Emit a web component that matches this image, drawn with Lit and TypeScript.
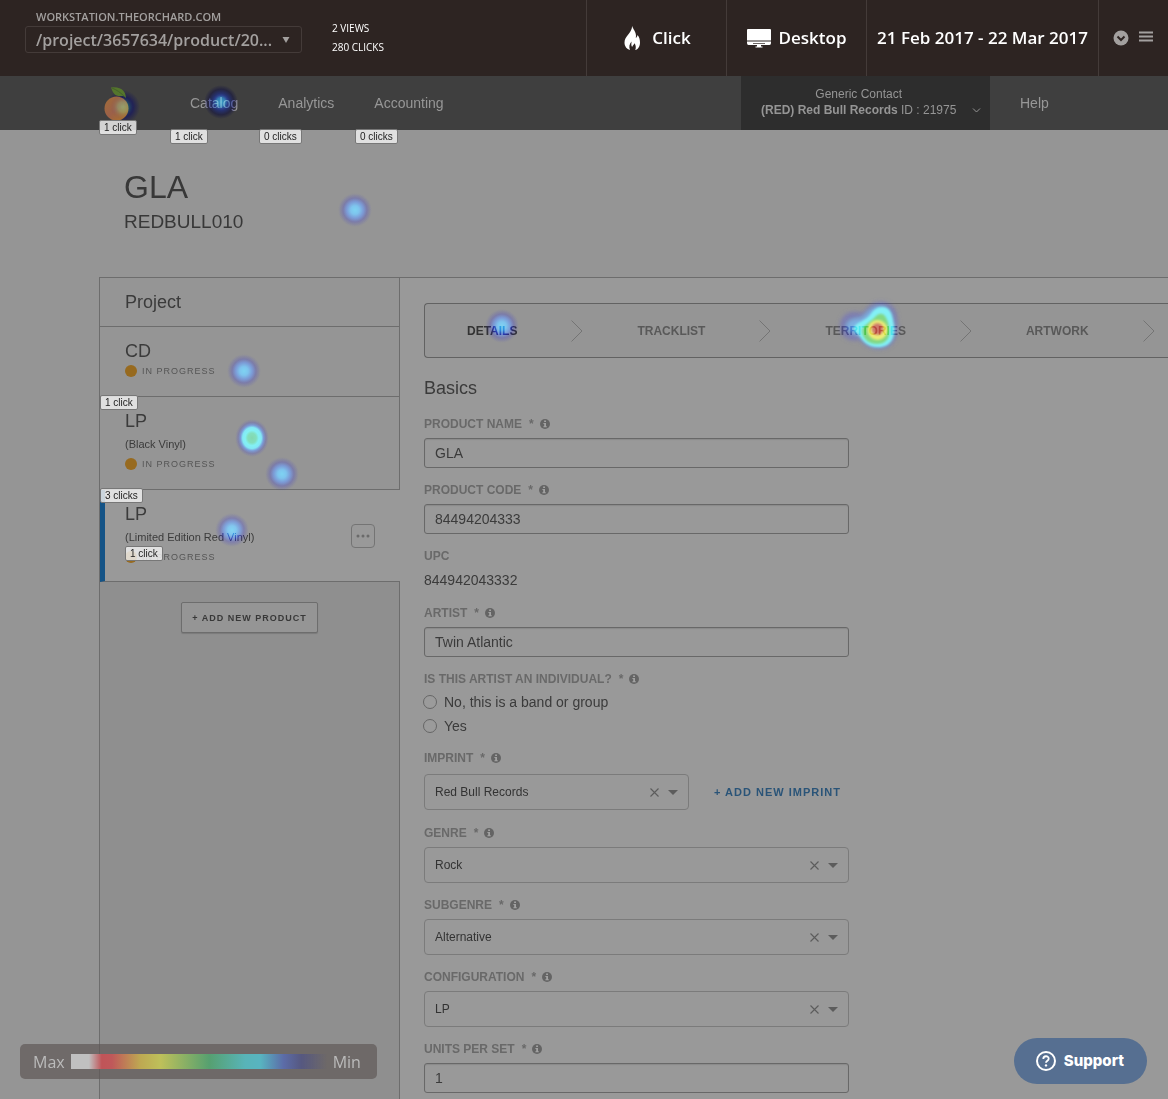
import { LitElement, html, css, svg, nothing } from "lit";
import { customElement, property } from "lit/decorators.js";
import { classMap } from "lit/directives/class-map.js";

interface Badge { x: number; y: number; label: string }
interface Spot { x: number; y: number; kind: "light" | "dark" | "warm" | "logo" }
interface Product { title: string; note?: string; active?: boolean }

const badges: Badge[] = [
  { x: 99, y: 120, label: "1 click" },
  { x: 170, y: 129, label: "1 click" },
  { x: 259, y: 129, label: "0 clicks" },
  { x: 355, y: 129, label: "0 clicks" },
  { x: 100, y: 395, label: "1 click" },
  { x: 100, y: 488, label: "3 clicks" },
  { x: 125, y: 546, label: "1 click" },
];

const spots: Spot[] = [
  { x: 123, y: 107, kind: "logo" },
  { x: 221, y: 102, kind: "dark" },
  { x: 355, y: 210, kind: "light" },
  { x: 502, y: 326, kind: "light" },
  { x: 244, y: 371, kind: "light" },
  { x: 252, y: 438, kind: "warm" },
  { x: 282, y: 474, kind: "light" },
  { x: 232, y: 530, kind: "light" },
];

const products: Product[] = [
  { title: "CD" },
  { title: "LP", note: "(Black Vinyl)" },
  { title: "LP", note: "(Limited Edition Red Vinyl)", active: true },
];

const steps = ["Details", "Tracklist", "Territories", "Artwork"];

/** Click density drawn over the tracked page. */
@customElement("heat-layer")
export class HeatLayer extends LitElement {
  static styles = css`
    :host {
      position: absolute;
      inset: 0;
      overflow: hidden;
      pointer-events: none;
    }
    .canvas {
      display: block;
      width: 100%;
      height: 100%;
      mix-blend-mode: hard-light;
    }
    .badge {
      position: absolute;
      height: 15px;
      padding: 0 4px;
      box-sizing: border-box;
      border: 1px solid #777;
      border-radius: 2px;
      background: rgba(238, 238, 238, 0.84);
      color: #222;
      font: 10px/13px "Liberation Sans", Arial, sans-serif;
      white-space: nowrap;
    }
  `;

  render() {
    return html`
      <svg class="canvas" aria-hidden="true">
        <defs>
          <radialGradient id="light">
            <stop offset="0" stop-color="#6ccaf0" />
            <stop offset=".25" stop-color="#6cb8ea" />
            <stop offset=".5" stop-color="#6a84cc" />
            <stop offset=".7" stop-color="#68689a" stop-opacity=".9" />
            <stop offset=".85" stop-color="#6a6a92" stop-opacity=".5" />
            <stop offset="1" stop-color="#707090" stop-opacity="0" />
          </radialGradient>
          <radialGradient id="dark">
            <stop offset="0" stop-color="#70bed8" />
            <stop offset=".25" stop-color="#68a8cc" />
            <stop offset=".5" stop-color="#4c64a0" />
            <stop offset=".75" stop-color="#464680" stop-opacity=".9" />
            <stop offset="1" stop-color="#464680" stop-opacity="0" />
          </radialGradient>
          <radialGradient id="logo">
            <stop offset="0" stop-color="#78b09c" />
            <stop offset=".4" stop-color="#78a494" stop-opacity=".85" />
            <stop offset="1" stop-color="#706c88" stop-opacity="0" />
          </radialGradient>
          <radialGradient id="warm">
            <stop offset="0" stop-color="#70d0a0" />
            <stop offset=".25" stop-color="#70d8b0" />
            <stop offset=".4" stop-color="#70eef2" />
            <stop offset=".55" stop-color="#70e4f4" />
            <stop offset=".68" stop-color="#6a84cc" />
            <stop offset=".82" stop-color="#6a6a98" stop-opacity=".8" />
            <stop offset="1" stop-color="#707090" stop-opacity="0" />
          </radialGradient>
          <filter id="soft" x="-30%" y="-30%" width="160%" height="160%"><feGaussianBlur stdDeviation="2" /></filter>
          <filter id="edge" x="-30%" y="-30%" width="160%" height="160%"><feGaussianBlur stdDeviation="1.2" /></filter>
        </defs>
        ${spots.map((s) =>
          s.kind === "warm"
            ? svg`<ellipse cx=${s.x} cy=${s.y} rx="17" ry="19" fill="url(#warm)" />`
            : svg`<circle cx=${s.x} cy=${s.y} r=${s.kind === "logo" ? 13 : 17} fill="url(#${s.kind})" />`
        )}
        <path d="M840 326c0-8 6-14 14-14 6 0 9 2 12-2 3-5 8-8 15-8 10 0 16 7 16 16 3 19-4 31-19 31-9 0-14-6-19-9-10 2-19-3-19-14z" fill="#6a6aa0" filter="url(#soft)" />
        <path d="M846 326c1-6 8-8 14-8 5-1 9-12 20-12 8 0 12 6 13 14 4 17-3 27-15 27-9 0-14-5-18-11-6-2-14-3-14-10z" fill="#6aa0dc" filter="url(#soft)" />
        <path d="M854 327c3-5 11-6 16-12 3-5 7-8 12-8 7 0 10 6 11 14 4 16-2 26-15 26-11 0-15-6-19-12-3-2-6-5-5-8z" fill="#70eef4" filter="url(#edge)" />
        <path d="M862 330c2-5 8-8 12-12 3-3 5-5 8-4 4 1 6 7 7 13 2 11-3 17-12 17-9 0-15-6-15-14z" fill="#70d070" filter="url(#edge)" />
        <circle cx="877.500" cy="330" r="10" fill="#eaea66" filter="url(#edge)" />
        <circle cx="877.500" cy="329" r="6" fill="#c8685c" filter="url(#edge)" />
      </svg>
      ${badges.map((b) => html`<span class="badge" style="left:${b.x}px;top:${b.y}px">${b.label}</span>`)}
    `;
  }
}

/** Caption with optional required mark and info icon. */
@customElement("field-caption")
export class FieldCaption extends LitElement {
  @property() text = "";
  @property({ type: Boolean }) required = false;

  static styles = css`
    :host {
      display: flex;
      align-items: center;
      height: 16px;
      color: #696969;
      font: bold 12px/17px "Liberation Sans", Arial, sans-serif;
      text-transform: uppercase;
    }
    .star {
      margin: 0 6px 0 7px;
    }
    .info {
      width: 10px;
      height: 10px;
    }
  `;

  render() {
    return html`${this.text}${this.required
      ? html`<span class="star">*</span>
          <svg class="info" viewBox="0 0 10 10" aria-hidden="true">
            <circle cx="5" cy="5" r="5" fill="#646464" />
            <path d="M4.100 1.500h1.900v1.500h-1.900zM3.400 4h2.600v3.200h.8v1.100h-3.400v-1.100h.8v-2.100h-.8z" fill="#a2a2a2" />
          </svg>`
      : nothing}`;
  }
}

@customElement("app-root")
export class AppRoot extends LitElement {
  static styles = css`
    :host {
      display: block;
      position: relative;
      min-height: 100vh;
      overflow: hidden;
      background: #959595;
      color: #3b3b3b;
      font: 14px/20px "Liberation Sans", Arial, sans-serif;
    }
    * {
      box-sizing: border-box;
    }
    h1, h2, p, ul, ol {
      margin: 0;
      padding: 0;
      font-weight: normal;
      list-style: none;
    }
    button, input, select {
      margin: 0;
      font-family: inherit;
      color: inherit;
    }
    button {
      padding: 0;
      border: 0;
      background: none;
    }
    .page {
      display: flex;
      flex-direction: column;
      min-height: 100vh;
    }

    .toolbar {
      display: flex;
      height: 76px;
      background: #2d2422;
      color: #fff;
      font-family: "Open Sans", "Noto Sans", sans-serif;
    }
    .address {
      display: flex;
      flex-direction: column;
      gap: 2px;
      width: 277px;
      margin: 9px 30px 0 25px;
      color: #a3a09f;
    }
    .domain {
      padding-left: 11px;
      font: 600 11px/15px "Open Sans", sans-serif;
    }
    .picker {
      display: flex;
      align-items: center;
      height: 27px;
      border: 1px solid #443b39;
      border-radius: 3px;
      padding-right: 11px;
    }
    .path {
      flex: 1;
      min-width: 0;
      height: 25px;
      padding: 0 0 0 10px;
      border: 0;
      appearance: none;
      background: none;
      font: 600 16px/24px "Open Sans", sans-serif;
    }
    .caret {
      width: 8px;
      height: 6px;
    }
    .totals {
      flex: 1;
      padding-top: 19px;
      font: 10px/19px "Open Sans", sans-serif;
    }
    .cell {
      display: flex;
      align-items: center;
      justify-content: center;
      width: 140px;
      border-left: 1px solid #443b39;
      font: 600 17px/24px "Open Sans", sans-serif;
      white-space: nowrap;
    }
    .cell.range {
      width: 232px;
    }
    .cell.tools {
      width: 70px;
      gap: 9px;
    }
    .flame {
      width: 20px;
      height: 26px;
      margin-right: 10px;
    }
    .screen {
      width: 24px;
      height: 20px;
      margin-right: 8px;
    }
    .tool {
      display: block;
      width: 16px;
      height: 16px;
    }

    .nav {
      display: flex;
      height: 54px;
      background: #3f3f3f;
      color: #979797;
    }
    .logo {
      width: 28px;
      height: 36px;
      margin: 9px 58px 0 104px;
      overflow: visible;
    }
    .links {
      display: flex;
      align-items: center;
      flex: 1;
      gap: 40px;
    }
    .nav a {
      color: inherit;
      text-decoration: none;
    }
    .account {
      display: grid;
      grid-template-columns: 1fr 9px;
      align-content: center;
      column-gap: 16px;
      width: 249px;
      padding: 0 10px 2px 20px;
      background: #2d2d2d;
      color: #959595;
      font-size: 12px;
      line-height: 16px;
      white-space: nowrap;
    }
    .account .contact {
      text-align: center;
      grid-column: 1;
    }
    .down {
      width: 9px;
      height: 16px;
    }
    .help {
      display: flex;
      align-items: center;
      width: 178px;
      padding-left: 30px;
    }

    .heading {
      padding: 37px 0 41px 124px;
    }
    .title {
      font-size: 32px;
      line-height: 40px;
      color: #383838;
    }
    .code {
      font-size: 19px;
      line-height: 29px;
      color: #383838;
    }

    .body {
      display: flex;
      flex: 1;
      margin-left: 99px;
      border-top: 1px solid #6d6d6d;
      background: #999;
    }
    .sidebar {
      display: flex;
      flex-direction: column;
      width: 301px;
      flex: none;
      border-left: 1px solid #6d6d6d;
    }
    .project {
      height: 49px;
      padding-left: 25px;
      background: #959595;
      border-right: 1px solid #6d6d6d;
      border-bottom: 1px solid #6d6d6d;
      font-size: 18px;
      line-height: 48px;
    }
    .product {
      display: flex;
      align-items: center;
      padding: 14px 24px 15px 25px;
      background: #959595;
      border-right: 1px solid #6d6d6d;
      border-bottom: 1px solid #6d6d6d;
    }
    .product.active {
      padding: 14px 25px 14px 20px;
      border-left: 5px solid #145386;
      border-right: 0;
      background: #999;
    }
    .summary {
      flex: 1;
    }
    .name {
      font-size: 18px;
      line-height: 20px;
    }
    .note {
      padding-top: 3px;
      font-size: 11px;
      line-height: 20px;
    }
    .status {
      display: flex;
      align-items: center;
      gap: 5px;
      color: #555;
      font-size: 9px;
      line-height: 20px;
      letter-spacing: 1px;
      text-transform: uppercase;
    }
    .dot {
      width: 12px;
      height: 12px;
      border-radius: 50%;
      background: #976a1f;
    }
    .more {
      display: flex;
      align-items: center;
      justify-content: center;
      width: 24px;
      height: 24px;
      border: 1px solid #747474;
      border-radius: 4px;
    }
    .dots {
      width: 14px;
      height: 4px;
    }
    .rest {
      flex: 1;
      display: flex;
      justify-content: center;
      align-items: flex-start;
      padding-top: 20px;
      background: #8f8f8f;
      border-right: 1px solid #6d6d6d;
    }
    .add-product {
      height: 31px;
      padding: 0 10px;
      border: 1px solid #6d6d6d;
      border-radius: 2px;
      background: #959595;
      box-shadow: 0 1px 1px rgba(0, 0, 0, 0.15);
      color: #383838;
      font-size: 9px;
      font-weight: bold;
      letter-spacing: 1px;
    }

    .content {
      flex: 1;
      min-width: 0;
      padding: 25px 0 6px 24px;
      overflow: hidden;
    }
    .steps {
      display: flex;
      align-items: center;
      gap: 54px;
      height: 55px;
      padding-left: 42px;
      border: 1px solid #626262;
      border-right: 0;
      border-radius: 4px 0 0 4px;
      background: #959595;
      color: #595959;
      font-size: 12px;
      font-weight: bold;
      text-transform: uppercase;
      overflow: hidden;
    }
    .step {
      display: flex;
      align-items: center;
      gap: 54px;
      flex: none;
    }
    .step a {
      color: inherit;
      text-decoration: none;
    }
    .step.current {
      color: #333;
    }
    .chevron {
      width: 12px;
      height: 24px;
    }
    .basics {
      margin: 18px 0 16px;
      font-size: 18px;
      line-height: 24px;
    }
    .form {
      display: flex;
      flex-direction: column;
      gap: 14px;
      width: 425px;
      max-width: 100%;
    }
    .field {
      display: flex;
      flex-direction: column;
      gap: 6px;
      min-width: 0;
      margin: 0;
      padding: 0;
      border: 0;
    }
    .legend {
      padding: 0;
      margin-bottom: 6px;
    }
    .text {
      width: 100%;
      height: 30px;
      padding: 0 10px;
      border: 1px solid #686868;
      border-radius: 3px;
      background: #999;
      box-shadow: inset 0 1px 1px rgba(0, 0, 0, 0.1);
      font-size: 14px;
    }
    .value {
      line-height: 21px;
    }
    .choices {
      display: flex;
      flex-direction: column;
      gap: 6px;
      padding-bottom: 1px;
    }
    .choice {
      display: flex;
      align-items: center;
      gap: 7px;
      line-height: 18px;
    }
    .radio {
      width: 14px;
      height: 14px;
      margin-left: -1px;
      appearance: none;
      border: 1px solid #666;
      border-radius: 50%;
      background: #9b9b9b;
    }
    .combo {
      display: flex;
      align-items: center;
      height: 36px;
      padding-right: 10px;
      border: 1px solid #7b7b7b;
      border-radius: 4px;
    }
    .select {
      flex: 1;
      min-width: 0;
      height: 34px;
      padding: 0 0 0 10px;
      border: 0;
      appearance: none;
      background: none;
      color: #333;
      font-size: 12px;
    }
    .clear {
      width: 9px;
      height: 9px;
      margin-right: 9px;
    }
    .glyph {
      display: block;
      width: 100%;
      height: 100%;
    }
    .arrow {
      width: 10px;
      height: 5px;
    }
    .imprint {
      display: grid;
      grid-template-columns: 265px auto;
      align-items: center;
      column-gap: 25px;
      padding: 2px 0 1px;
    }
    .add-imprint {
      justify-self: start;
      color: #2a5478;
      font-size: 11px;
      font-weight: bold;
      letter-spacing: 1px;
      white-space: nowrap;
    }

    .scale {
      position: fixed;
      left: 20px;
      bottom: 20px;
      display: flex;
      align-items: center;
      gap: 6px;
      height: 35px;
      padding: 0 16px 0 13px;
      border-radius: 5px;
      background: rgba(95, 88, 87, 0.7);
      color: #bbb;
      font: 16px/24px "Open Sans", sans-serif;
    }
    .ramp {
      width: 256px;
      height: 15px;
      background: linear-gradient(90deg, #c0c0c0 7%, #c05458 12%, #c0585a 16%, #bea852 27%, #bec05a 35%, #56a070 54%, #58b4b8 68%, #58b4c0 74%, #5c6ca8 83%, #565880 90%, rgba(86, 88, 128, 0) 100%);
    }
    .support {
      position: fixed;
      right: 21px;
      bottom: 15px;
      display: flex;
      align-items: center;
      gap: 8px;
      height: 46px;
      padding: 0 23px 0 22px;
      border-radius: 23px;
      background: #566f91;
      color: #fff;
      font: 800 15px/20px Inter, sans-serif;
    }
    .question {
      width: 20px;
      height: 20px;
    }
  `;

  private combo(id: string, value: string) {
    return html`<div class="combo">
      <select class="select" id=${id}><option>${value}</option></select>
      <button class="clear" type="button" aria-label="Clear">
        <svg class="glyph" viewBox="0 0 9 9"><path d="M.5.5l8 8M8.500.5l-8 8" stroke="#5c5c5c" stroke-width="1.100" fill="none" /></svg>
      </button>
      <svg class="arrow" viewBox="0 0 10 5" aria-hidden="true"><path d="M0 0h10L5 5z" fill="#5c5c5c" /></svg>
    </div>`;
  }

  private textField(id: string, label: string, value: string) {
    return html`<div class="field">
      <label for=${id}><field-caption text=${label} required></field-caption></label>
      <input class="text" id=${id} type="text" .value=${value} />
    </div>`;
  }

  private selectField(id: string, label: string, value: string) {
    return html`<div class="field">
      <label for=${id}><field-caption text=${label} required></field-caption></label>
      ${this.combo(id, value)}
    </div>`;
  }

  private toolbar() {
    return html`<header class="toolbar">
      <div class="address">
        <label class="domain" for="path">WORKSTATION.THEORCHARD.COM</label>
        <div class="picker">
          <select class="path" id="path"><option>/project/3657634/product/20...</option></select>
          <svg class="caret" viewBox="0 0 8 6" aria-hidden="true"><path d="M.5 0h7L4 6z" fill="#a3a09f" /></svg>
        </div>
      </div>
      <div class="totals"><p>2 VIEWS</p><p>280 CLICKS</p></div>
      <button class="cell" type="button">
        <svg class="flame" viewBox="0 0 20 26" aria-hidden="true">
          <path d="M10.200 1c.8 3.300 3.800 5.600 3.800 9.700 0 1-.2 1.800-.2 2.400.9-.6 1.500-1.600 1.700-3 1.700 1.900 2.500 4.500 2.500 7.400 0 4-2 6.900-4.800 7.500 1-1.900.7-4.200-.6-6.700-.6 1.200-1.700 2-2.500 3.700-.8-1-1-2.700-.5-5.500-2 2.300-3 5.200-1.600 8.500C4.800 24.300 2.500 21.500 2.500 17.600c0-6.500 6.900-9 7.700-16.600z" fill="#fff" />
        </svg>Click
      </button>
      <button class="cell" type="button">
        <svg class="screen" viewBox="0 0 24 20" aria-hidden="true">
          <path d="M1 1h22q1 0 1 1V12.500H0V2Q0 1 1 1zM0 13.500h24V15q0 2-1.500 2H1.500Q0 17 0 15zM10 17h4v1.500h1.500v1h-7v-1H10z" fill="#fff" />
          <path d="M6 15.500h12" stroke="#6c6563" />
        </svg>Desktop
      </button>
      <button class="cell range" type="button">21 Feb 2017 - 22 Mar 2017</button>
      <div class="cell tools">
        <button class="tool" type="button" aria-label="Expand">
          <svg class="glyph" viewBox="0 0 16 16"><circle cx="8" cy="8" r="7.500" fill="#a3a09f" /><path d="M4.500 6.500L8 10l3.500-3.500" stroke="#2d2422" stroke-width="2" fill="none" /></svg>
        </button>
        <button class="tool" type="button" aria-label="Menu">
          <svg class="glyph" viewBox="0 0 16 16"><path d="M1 2.500h14M1 6.500h14M1 10.500h14" stroke="#a3a09f" stroke-width="1.800" /></svg>
        </button>
      </div>
    </header>`;
  }

  private nav() {
    return html`<nav class="nav">
      <svg class="logo" viewBox="0 0 28 36" aria-hidden="true">
        <defs>
          <linearGradient id="peel" x2="1" y2="1"><stop stop-color="#a06c38" /><stop offset=".5" stop-color="#9c6048" /><stop offset="1" stop-color="#ac7424" /></linearGradient>
          <radialGradient id="halo"><stop offset=".6" stop-color="#222250" /><stop offset="1" stop-color="#222250" stop-opacity="0" /></radialGradient>
        </defs>
        <circle cx="19" cy="22" r="17" fill="url(#halo)" />
        <circle cx="12.500" cy="23.500" r="12" fill="url(#peel)" />
        <path d="M7 2.500c5-.8 10 .3 12.500 3.500 1.700 2 2.200 4 2.500 7-2-2-3.800-2-6-1.800C11 11 9 8.500 7 2.500z" fill="#55762c" />
        <path d="M8 3c5 2 8.500 4.500 13 9" stroke="#45602a" fill="none" />
      </svg>
      <div class="links"><a href="#catalog">Catalog</a><a href="#analytics">Analytics</a><a href="#accounting">Accounting</a></div>
      <button class="account" type="button">
        <span class="contact">Generic Contact</span>
        <span class="contact"><b>(RED) Red Bull Records</b> ID : 21975</span>
        <svg class="down" viewBox="0 0 9 16" aria-hidden="true"><path d="M1 6.500L4.500 10 8 6.500" stroke="#959595" fill="none" /></svg>
      </button>
      <div class="help"><a href="#help">Help</a></div>
    </nav>`;
  }

  private sidebar() {
    return html`<aside class="sidebar">
      <h2 class="project">Project</h2>
      ${products.map(
        (p) => html`<div class=${classMap({ product: true, active: !!p.active })}>
          <div class="summary">
            <p class="name">${p.title}</p>
            ${p.note ? html`<p class="note">${p.note}</p>` : nothing}
            <p class="status"><span class="dot"></span>In progress</p>
          </div>
          ${p.active
            ? html`<button class="more" type="button" aria-label="More">
                <svg class="dots" viewBox="0 0 14 4"><circle cx="2" cy="2" r="1.500" fill="#6a6a6a" /><circle cx="7" cy="2" r="1.500" fill="#6a6a6a" /><circle cx="12" cy="2" r="1.500" fill="#6a6a6a" /></svg>
              </button>`
            : nothing}
        </div>`
      )}
      <div class="rest"><button class="add-product" type="button">+ ADD NEW PRODUCT</button></div>
    </aside>`;
  }

  private content() {
    return html`<main class="content">
      <ol class="steps">
        ${steps.map(
          (name, i) => html`<li class=${classMap({ step: true, current: i === 0 })}>
            <a href="#${name.toLowerCase()}">${name}</a>
            <svg class="chevron" viewBox="0 0 12 24" aria-hidden="true"><path d="M.5 1.500L11 12 .5 22.500" stroke="#747474" fill="none" /></svg>
          </li>`
        )}
      </ol>
      <h2 class="basics">Basics</h2>
      <form class="form">
        ${this.textField("name", "Product name", "GLA")}
        ${this.textField("code", "Product code", "84494204333")}
        <div class="field"><field-caption text="UPC"></field-caption><span class="value">844942043332</span></div>
        ${this.textField("artist", "Artist", "Twin Atlantic")}
        <fieldset class="field">
          <legend class="legend"><field-caption text="Is this artist an individual?" required></field-caption></legend>
          <div class="choices">
            <label class="choice"><input class="radio" type="radio" name="individual" />No, this is a band or group</label>
            <label class="choice"><input class="radio" type="radio" name="individual" />Yes</label>
          </div>
        </fieldset>
        <div class="field">
          <label for="imprint"><field-caption text="Imprint" required></field-caption></label>
          <div class="imprint">
            ${this.combo("imprint", "Red Bull Records")}
            <button class="add-imprint" type="button">+ ADD NEW IMPRINT</button>
          </div>
        </div>
        ${this.selectField("genre", "Genre", "Rock")}
        ${this.selectField("subgenre", "Subgenre", "Alternative")}
        ${this.selectField("configuration", "Configuration", "LP")}
        ${this.textField("units", "Units per set", "1")}
      </form>
    </main>`;
  }

  render() {
    return html`
      <div class="page">
        ${this.toolbar()} ${this.nav()}
        <div class="heading">
          <h1 class="title">GLA</h1>
          <p class="code">REDBULL010</p>
        </div>
        <div class="body">${this.sidebar()} ${this.content()}</div>
      </div>
      <heat-layer></heat-layer>
      <div class="scale"><span>Max</span><div class="ramp"></div><span>Min</span></div>
      <button class="support" type="button">
        <svg class="question" viewBox="0 0 20 20" aria-hidden="true">
          <circle cx="10" cy="10" r="9" stroke="#fff" stroke-width="2" fill="none" />
          <path d="M7.300 8c0-3.600 5.400-3.600 5.400-.3 0 2-2.700 2-2.700 4.100" stroke="#fff" stroke-width="1.800" fill="none" />
          <circle cx="10" cy="14.400" r="1.200" fill="#fff" />
        </svg>Support
      </button>
    `;
  }
}
